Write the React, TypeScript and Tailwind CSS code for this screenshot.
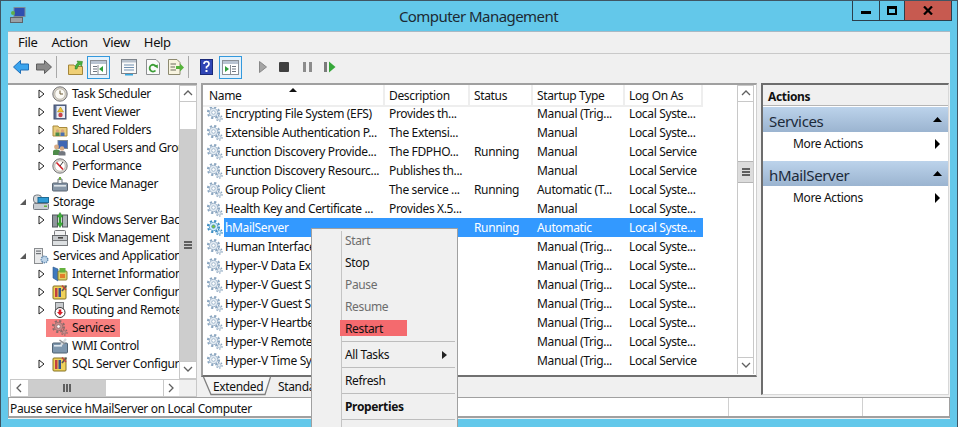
import React from 'react';

const FONT = "font-['Noto_Sans',sans-serif]";

// Small service gear used in the list and tree
function Gear({ active = false, muted = false }: { active?: boolean; muted?: boolean }) {
  const main = muted ? '#8a6a6a' : active ? '#3f8fc4' : '#8ba6c0';
  const fill = muted ? '#c98a8a' : active ? '#d7eefc' : '#e3ebf2';
  const hub = active ? '#7fc23f' : '#ffffff';
  return (
    <svg width="16" height="16" viewBox="0 0 16 16" className="shrink-0">
      <circle cx="6.5" cy="6.5" r="5.6" fill="none" stroke={main} strokeWidth="2" strokeDasharray="2.2 2.2" />
      <circle cx="6.5" cy="6.5" r="4.2" fill={fill} stroke={main} strokeWidth="0.8" />
      <circle cx="6.5" cy="6.5" r="1.8" fill={hub} stroke={main} strokeWidth="0.7" />
      <circle cx="12.2" cy="12.2" r="2.9" fill="none" stroke={main} strokeWidth="1.4" strokeDasharray="1.5 1.5" />
      <circle cx="12.2" cy="12.2" r="1.8" fill={fill} stroke={main} strokeWidth="0.6" />
    </svg>
  );
}

function TreeIcon({ kind }: { kind: string }) {
  switch (kind) {
    case 'clock':
      return (
        <svg width="16" height="16" viewBox="0 0 16 16">
          <circle cx="8" cy="8" r="7.2" fill="#d9d4c8" stroke="#77777a" />
          <circle cx="8" cy="8" r="5.2" fill="#fbfaf5" stroke="#a7a39a" strokeWidth="0.6" />
          <path d="M8 4.5V8H11" fill="none" stroke="#6b5a35" strokeWidth="1" />
        </svg>
      );
    case 'log':
      return (
        <svg width="16" height="16" viewBox="0 0 16 16">
          <rect x="2" y="1" width="12" height="14" fill="#5d6f96" stroke="#44506e" />
          <rect x="4.5" y="2" width="8.5" height="12" fill="#e9edf5" />
          <path d="M8.5 3L11.5 8H5.5Z" fill="#f3c62f" stroke="#9c7a12" strokeWidth="0.5" />
          <circle cx="8.5" cy="11" r="2.2" fill="#c9434b" />
        </svg>
      );
    case 'share':
      return (
        <svg width="16" height="16" viewBox="0 0 16 16">
          <path d="M1 4H6L7 5.5H15V14H1Z" fill="#e9cd7c" stroke="#a98a3c" />
          <circle cx="5.5" cy="9" r="1.7" fill="#d8a47c" />
          <rect x="3.5" y="10.5" width="4" height="3.5" fill="#4f8c4a" />
          <circle cx="10.5" cy="9" r="1.7" fill="#d8a47c" />
          <rect x="8.5" y="10.5" width="4" height="3.5" fill="#4b6fb0" />
        </svg>
      );
    case 'users':
      return (
        <svg width="16" height="16" viewBox="0 0 16 16">
          <rect x="6" y="0.5" width="9.5" height="8" fill="#3f66b4" stroke="#7d8794" />
          <circle cx="4.5" cy="7" r="2.4" fill="#d9ab84" />
          <path d="M1 15V11.5Q1 9.5 4.5 9.5T8 11.5V15Z" fill="#4f8c4a" />
          <circle cx="10" cy="8.5" r="2.3" fill="#d9ab84" />
          <path d="M6.5 15.5V13Q6.5 11 10 11T13.5 13V15.5Z" fill="#72777f" />
        </svg>
      );
    case 'perf':
      return (
        <svg width="16" height="16" viewBox="0 0 16 16">
          <circle cx="8" cy="8" r="7.2" fill="#d9d6d0" stroke="#77777a" />
          <circle cx="8" cy="8" r="5.2" fill="#ffffff" stroke="#a7a39a" strokeWidth="0.6" />
          <path d="M4.5 4.5L11 11.5" stroke="#d2232a" strokeWidth="1.6" />
          <path d="M8 8L11 4" stroke="#3a3a3a" strokeWidth="1" />
        </svg>
      );
    case 'device':
      return (
        <svg width="16" height="16" viewBox="0 0 16 16">
          <rect x="0.5" y="7" width="15" height="8" rx="1" fill="#8797a8" stroke="#5a6572" />
          <rect x="2" y="9" width="12" height="1.6" fill="#dfe5ea" />
          <path d="M6 7V3H10V7" fill="#eef1f3" stroke="#6a7480" />
          <rect x="7" y="1" width="2" height="3" fill="#6faa3f" />
        </svg>
      );
    case 'storage':
      return (
        <svg width="16" height="16" viewBox="0 0 16 16">
          <rect x="0.5" y="9.5" width="15" height="6" rx="1" fill="#c7ccd1" stroke="#737980" />
          <rect x="0.5" y="1" width="8" height="8" rx="3" fill="#d5d8db" stroke="#737980" />
          <rect x="5" y="3.5" width="10.5" height="5" fill="#2f9bd5" stroke="#1d6a94" />
          <rect x="11" y="11.5" width="3" height="1.5" fill="#64b33f" />
        </svg>
      );
    case 'backup':
      return (
        <svg width="16" height="16" viewBox="0 0 16 16">
          <rect x="0.5" y="3" width="5" height="12" fill="#8f959c" stroke="#55595f" />
          <rect x="10.5" y="3" width="5" height="12" fill="#aeb3b9" stroke="#55595f" />
          <path d="M8 0.5L11 5H9V11L11 11L8 15.5L5 11H7V5H5Z" fill="#3fae3c" stroke="#1e7a1e" strokeWidth="0.5" />
        </svg>
      );
    case 'disk':
      return (
        <svg width="16" height="16" viewBox="0 0 16 16">
          <rect x="2.5" y="0.5" width="11" height="5" rx="1" fill="#f0f1f2" stroke="#77797c" />
          <rect x="0.5" y="5.5" width="15" height="5" fill="#c5c8cb" stroke="#66696c" />
          <rect x="0.5" y="10.5" width="15" height="5" fill="#dcdfe1" stroke="#77797c" />
          <rect x="6" y="7" width="5" height="1.6" fill="#444" />
        </svg>
      );
    case 'apps':
      return (
        <svg width="16" height="16" viewBox="0 0 16 16">
          <rect x="1.5" y="0.5" width="8" height="15" fill="#e8e9ea" stroke="#8a8d90" />
          <rect x="3" y="2.5" width="5" height="1.2" fill="#6f7377" />
          <rect x="3" y="5" width="5" height="1.2" fill="#6f7377" />
          <circle cx="11.5" cy="11.5" r="3.3" fill="#bcd3e8" stroke="#5f87ad" strokeWidth="1.4" strokeDasharray="1.4 0.9" />
        </svg>
      );
    case 'iis':
      return (
        <svg width="16" height="16" viewBox="0 0 16 16">
          <path d="M1 1L6 3V15L1 12Z" fill="#3f79bd" stroke="#2a5688" strokeWidth="0.6" />
          <rect x="6" y="5" width="9" height="9" rx="1" fill="#dfd266" stroke="#8a8030" />
          <rect x="7.5" y="2" width="6" height="4.5" fill="#66b23f" />
          <rect x="8" y="8" width="5" height="4" fill="#e27d2a" />
        </svg>
      );
    case 'sql':
      return (
        <svg width="16" height="16" viewBox="0 0 16 16">
          <rect x="1" y="2" width="13" height="13" rx="1" fill="#f0d25a" stroke="#857222" />
          <rect x="3" y="4" width="2.5" height="9" fill="#c33f3f" />
          <rect x="6.5" y="4" width="2.5" height="9" fill="#33558f" />
          <path d="M10 7L14.5 1.5" stroke="#555" strokeWidth="1.6" />
          <path d="M10 1.5L14 6" stroke="#c33f3f" strokeWidth="1.3" />
        </svg>
      );
    case 'routing':
      return (
        <svg width="16" height="16" viewBox="0 0 16 16">
          <rect x="3.5" y="0.5" width="8" height="10" fill="#c9cccf" stroke="#74777a" />
          <circle cx="8" cy="10.5" r="5" fill="#fff" stroke="#333" />
          <path d="M6.7 7.5H9.3V10H11L8 13.5L5 10H6.7Z" fill="#d8202a" />
        </svg>
      );
    case 'wmi':
      return (
        <svg width="16" height="16" viewBox="0 0 16 16">
          <rect x="0.5" y="5" width="15" height="10" rx="1" fill="#7e97ae" stroke="#4f6273" />
          <rect x="2" y="7" width="8" height="1.6" fill="#dfe8ef" />
          <path d="M9 7L14 1" stroke="#d5d8db" strokeWidth="2.2" />
          <path d="M7.5 2L13 6" stroke="#8b8f93" strokeWidth="1.4" />
        </svg>
      );
    default:
      return <Gear muted />;
  }
}

function Expander({ open = false }: { open?: boolean }) {
  return open ? (
    <svg width="8" height="8" viewBox="0 0 8 8"><path d="M7 1V7H1Z" fill="#595959" /></svg>
  ) : (
    <svg width="7" height="10" viewBox="0 0 7 10"><path d="M1 1L6 5L1 9Z" fill="#fff" stroke="#222" /></svg>
  );
}

const treeRows = [
  { label: 'Task Scheduler', icon: 'clock', level: 1, exp: true },
  { label: 'Event Viewer', icon: 'log', level: 1, exp: true },
  { label: 'Shared Folders', icon: 'share', level: 1, exp: true },
  { label: 'Local Users and Groups', icon: 'users', level: 1, exp: true },
  { label: 'Performance', icon: 'perf', level: 1, exp: true },
  { label: 'Device Manager', icon: 'device', level: 1 },
  { label: 'Storage', icon: 'storage', level: 0, open: true },
  { label: 'Windows Server Backup', icon: 'backup', level: 1, exp: true },
  { label: 'Disk Management', icon: 'disk', level: 1 },
  { label: 'Services and Applications', icon: 'apps', level: 0, open: true },
  { label: 'Internet Information Services', icon: 'iis', level: 1, exp: true },
  { label: 'SQL Server Configuration', icon: 'sql', level: 1, exp: true },
  { label: 'Routing and Remote Access', icon: 'routing', level: 1, exp: true },
  { label: 'Services', icon: 'services', level: 1, marked: true },
  { label: 'WMI Control', icon: 'wmi', level: 1 },
  { label: 'SQL Server Configuration', icon: 'sql', level: 1, exp: true },
];

const services = [
  ['Encrypting File System (EFS)', 'Provides th...', '', 'Manual (Trig...', 'Local Syste...'],
  ['Extensible Authentication P...', 'The Extensi...', '', 'Manual', 'Local Syste...'],
  ['Function Discovery Provide...', 'The FDPHO...', 'Running', 'Manual', 'Local Service'],
  ['Function Discovery Resourc...', 'Publishes th...', '', 'Manual', 'Local Service'],
  ['Group Policy Client', 'The service ...', 'Running', 'Automatic (T...', 'Local Syste...'],
  ['Health Key and Certificate ...', 'Provides X.5...', '', 'Manual', 'Local Syste...'],
  ['hMailServer', '', 'Running', 'Automatic', 'Local Syste...'],
  ['Human Interface', '', '', 'Manual (Trig...', 'Local Syste...'],
  ['Hyper-V Data Ex', '', '', 'Manual (Trig...', 'Local Syste...'],
  ['Hyper-V Guest S', '', '', 'Manual (Trig...', 'Local Syste...'],
  ['Hyper-V Guest S', '', '', 'Manual (Trig...', 'Local Syste...'],
  ['Hyper-V Heartbe', '', '', 'Manual (Trig...', 'Local Syste...'],
  ['Hyper-V Remote', '', '', 'Manual (Trig...', 'Local Syste...'],
  ['Hyper-V Time Sy', '', '', 'Manual (Trig...', 'Local Service'],
];

function ScrollArrow({ dir }: { dir: 'up' | 'down' | 'left' | 'right' }) {
  const d = { up: 'M1 6L5 2L9 6', down: 'M1 2L5 6L9 2', left: 'M6 1L2 5L6 9', right: 'M2 1L6 5L2 9' }[dir];
  return (
    <svg width="10" height="10" viewBox="0 0 10 10" className="shrink-0">
      <path d={d} fill="none" stroke="#606060" strokeWidth="1.3" />
    </svg>
  );
}

function Grip({ vertical = false }: { vertical?: boolean }) {
  return vertical ? (
    <div className="flex gap-[1px]">
      <div className="w-[2px] h-[8px] bg-[#606060]" />
      <div className="w-[2px] h-[8px] bg-[#606060]" />
      <div className="w-[2px] h-[8px] bg-[#606060]" />
    </div>
  ) : (
    <div className="flex flex-col gap-[1px]">
      <div className="w-[8px] h-[2px] bg-[#606060]" />
      <div className="w-[8px] h-[2px] bg-[#606060]" />
      <div className="w-[8px] h-[2px] bg-[#606060]" />
    </div>
  );
}

function PaneIcon({ right = false }: { right?: boolean }) {
  return (
    <svg width="17" height="17" viewBox="0 0 17 17">
      <rect x="0.5" y="1.5" width="16" height="14" fill="#fff" stroke="#8a8f96" />
      <rect x="1" y="2" width="15" height="3" fill="#b9c4d2" />
      {right ? (
        <>
          <path d="M3 7V13L7 10Z" fill="#2f9e3a" />
          <path d="M10 7.5H14M10 10H14M10 12.5H14" stroke="#6d7580" />
        </>
      ) : (
        <>
          <path d="M3 7.5H7M3 10H7M3 12.5H7" stroke="#6d7580" />
          <path d="M13 7V13L9 10Z" fill="#2f9e3a" />
        </>
      )}
      <path d={right ? 'M8.5 6V15' : 'M8 6V15'} stroke="#8a8f96" />
    </svg>
  );
}

function Toolbar() {
  return (
    <div className="h-[30px] flex items-center border-t border-[#c9c9c9] pl-[5px] pb-[3px]">
      <svg width="16" height="14" viewBox="0 0 16 14">
        <path d="M7.5 0.5L0.5 7L7.5 13.5V10H15.5V4H7.5Z" fill="#3aa4ee" stroke="#1f6fb8" />
      </svg>
      <svg width="16" height="14" viewBox="0 0 16 14" className="ml-[7px]">
        <path d="M8.5 0.5L15.5 7L8.5 13.5V10H0.5V4H8.5Z" fill="#8a8a8a" stroke="#5e5e5e" />
      </svg>
      <div className="w-px h-[22px] bg-[#a9a9a9] ml-[4px]" />
      <svg width="16" height="15" viewBox="0 0 16 15" className="ml-[11px]">
        <path d="M0.5 5H6L7 6.5H14.5V14.5H0.5Z" fill="#efcf75" stroke="#a4863a" />
        <path d="M7 9Q7 4 10 3L9 1L14.5 1.5L13.5 6.5L12 4.5Q9.5 5.5 9 9Z" fill="#49b13c" stroke="#2b7d26" strokeWidth="0.5" />
      </svg>
      <div className="w-[23px] h-[23px] ml-[3px] border border-[#3399dd] bg-[#e4f1fb] flex items-center justify-center">
        <PaneIcon />
      </div>
      <svg width="16" height="17" viewBox="0 0 16 17" className="ml-[11px]">
        <rect x="0.5" y="0.5" width="15" height="14" fill="#fafafa" stroke="#7d838a" />
        <rect x="1" y="1" width="14" height="2.5" fill="#b8c2cd" />
        <path d="M3 6H13M3 8.5H13M3 11H13" stroke="#6e8fb0" />
        <rect x="4" y="15" width="8" height="1.5" fill="#35a7e0" />
      </svg>
      <svg width="14" height="16" viewBox="0 0 14 16" className="ml-[9px]">
        <path d="M0.5 0.5H10L13.5 4V15.5H0.5Z" fill="#fafafa" stroke="#8d8f91" />
        <path d="M10 7.5A3.4 3.4 0 1 0 9.5 11.5" fill="none" stroke="#3b9d35" strokeWidth="1.8" />
        <path d="M8 7L11.8 5.5V9.5Z" fill="#3b9d35" />
      </svg>
      <svg width="16" height="16" viewBox="0 0 16 16" className="ml-[8px]">
        <path d="M0.5 0.5H9L12 3.5V15.5H0.5Z" fill="#f8f4e0" stroke="#8d8a70" />
        <path d="M2.5 5H8M2.5 8H7M2.5 11H8" stroke="#6a6a5a" />
        <path d="M8 7H12V4.5L16 8.5L12 12.5V10H8Z" fill="#56b33c" />
      </svg>
      <div className="w-px h-[22px] bg-[#a9a9a9] ml-[4px]" />
      <svg width="13" height="16" viewBox="0 0 13 16" className="ml-[11px]">
        <rect x="0.5" y="0.5" width="12" height="15" fill="#2f45b5" stroke="#1b2a78" />
        <path d="M4 5Q4 2.5 6.5 2.5T9 5Q9 6.5 6.5 8V9.5" fill="none" stroke="#fff" strokeWidth="1.7" />
        <rect x="5.5" y="11" width="2" height="2" fill="#fff" />
      </svg>
      <div className="w-[23px] h-[23px] ml-[6px] border border-[#3399dd] bg-[#e4f1fb] flex items-center justify-center">
        <PaneIcon right />
      </div>
      <svg width="8" height="12" viewBox="0 0 8 12" className="ml-[17px]">
        <path d="M0.5 0.5L7.5 6L0.5 11.5Z" fill="#a5a5a5" stroke="#888" />
      </svg>
      <div className="w-[10px] h-[10px] ml-[12px] bg-[#404040] rounded-[1px]" />
      <div className="ml-[14px] flex gap-[3px]">
        <div className="w-[3px] h-[10px] bg-[#8c8c8c]" />
        <div className="w-[3px] h-[10px] bg-[#8c8c8c]" />
      </div>
      <svg width="12" height="12" viewBox="0 0 12 12" className="ml-[12px]">
        <rect x="0" y="1" width="3" height="10" fill="#7b7b7b" />
        <path d="M5 0.5L11.5 6L5 11.5Z" fill="#36a83a" />
      </svg>
    </div>
  );
}

function TreePane() {
  return (
    <div className="w-[189px] flex flex-col bg-white border-t-2 border-[#a0a0a0]">
      <div className="flex-1 flex min-h-0">
        <div className="flex-1 min-w-0 overflow-hidden">
          {treeRows.map((r, i) => (
            <div
              key={i}
              className={`h-[18px] flex items-center whitespace-nowrap ${r.level === 1 ? 'pl-[30px]' : 'pl-[11px]'}`}
            >
              <div className="w-[14px] flex justify-start shrink-0">
                {r.exp && <Expander />}
                {r.open && <Expander open />}
              </div>
              <div className={`h-[18px] flex items-center shrink-0 gap-[4px] ${r.marked ? 'bg-[#f88080] -ml-[6px] pl-[6px] pr-[5px]' : ''}`}>
                <div className="w-[16px] h-[16px] shrink-0"><TreeIcon kind={r.icon} /></div>
                <span>{r.label}</span>
              </div>
            </div>
          ))}
        </div>
        <div className="w-[18px] flex flex-col border border-[#c8c8c8] bg-white shrink-0">
          <div className="h-[16px] flex items-center justify-center border-b border-[#c8c8c8]"><ScrollArrow dir="up" /></div>
          <div className="h-[27px]" />
          <div className="flex-1 bg-[#cdcdcd] flex items-center justify-center"><Grip /></div>
          <div className="h-[17px] flex items-center justify-center border-t border-[#c8c8c8]"><ScrollArrow dir="down" /></div>
        </div>
      </div>
      <div className="h-[18px] flex border border-[#c8c8c8] ml-[2px]">
        <div className="w-[17px] flex items-center justify-center"><ScrollArrow dir="left" /></div>
        <div className="w-[78px] bg-[#cdcdcd] flex items-center justify-center"><Grip vertical /></div>
        <div className="flex-1" />
        <div className="w-[16px] flex items-center justify-center border-l border-[#c8c8c8]"><ScrollArrow dir="right" /></div>
        <div className="w-[17px] bg-[#f0f0f0]" />
      </div>
    </div>
  );
}

function ListPane() {
  const cols = 'grid grid-cols-[182px_85px_63px_92px_78px]';
  return (
    <div className="w-[556px] ml-[4px] flex flex-col">
      <div className="h-[294px] flex bg-white border-t-2 border-l-2 border-r border-b-2 border-[#a0a0a0] border-r-[#d0d0d0] border-b-[#707070]">
        <div className="flex-1 min-w-0 overflow-hidden">
          <div className={`${cols} h-[19px] relative`}>
            {['Name', 'Description', 'Status', 'Startup Type', 'Log On As'].map((h, i) => (
              <div key={h} className={`border-r-2 border-b-2 border-[#eeeeee] flex items-center pt-[2px] ${i === 0 ? 'pl-[6px]' : 'pl-[4px]'}`}>
                {h}
              </div>
            ))}
            <svg width="8" height="4" viewBox="0 0 8 4" className="absolute left-[86px] top-[3px]">
              <path d="M0 4L4 0L8 4Z" fill="#111" />
            </svg>
          </div>
          {services.map((s, i) => {
            const active = s[0] === 'hMailServer';
            return (
              <div key={i} className={`${cols} h-[19px] whitespace-nowrap`}>
                <div className="flex items-center pl-[4px] gap-[1px] min-w-0 overflow-hidden">
                  <Gear active={active} />
                  <span className={`flex-1 h-full flex items-center pl-[1px] ${active ? 'bg-[#3399ff] text-white' : ''}`}>{s[0]}</span>
                </div>
                {s.slice(1).map((c, j) => (
                  <div key={j} className={`flex items-center pl-[4px] ${active ? 'bg-[#3399ff] text-white' : ''}`}>{c}</div>
                ))}
              </div>
            );
          })}
        </div>
        <div className="w-[17px] shrink-0 flex flex-col border-x border-t border-[#c8c8c8] mb-[1px] mr-[2px]">
          <div className="h-[16px] flex items-center justify-center border-b border-[#c8c8c8]"><ScrollArrow dir="up" /></div>
          <div className="h-[59px]" />
          <div className="h-[22px] bg-[#dcdcdc] border-y border-[#b5b5b5] flex items-center justify-center"><Grip /></div>
          <div className="flex-1" />
          <div className="h-[17px] flex items-center justify-center border-t border-[#c8c8c8]"><ScrollArrow dir="down" /></div>
        </div>
      </div>
      <div className="h-[20px] flex items-start pl-[2px]">
        <div className="relative w-[66px] h-[18px] flex items-center pl-[10px] pt-[1px]">
          <svg width="68" height="19" viewBox="0 0 68 19" className="absolute left-0 top-0">
            <path d="M0.5 0L8 17.5H62L67.5 0" fill="#f6f6f6" stroke="#808080" strokeWidth="1.3" />
          </svg>
          <span className="relative">Extended</span>
        </div>
        <div className="h-[18px] pl-[9px] pt-[1px] flex items-center">Standard</div>
      </div>
    </div>
  );
}

function ActionBand({ title }: { title: string }) {
  return (
    <>
      <div className="h-[25px] bg-gradient-to-b from-[#bcd3eb] to-[#9bb4d0] flex items-center justify-between pl-[6px] pr-[6px] pt-[3px]">
        <span className="text-[15px] text-[#1c2a3a]">{title}</span>
        <svg width="9" height="5" viewBox="0 0 9 5" className="-mt-[3px]"><path d="M0 5L4.5 0L9 5Z" fill="#000" /></svg>
      </div>
      <div className="h-[29px] flex items-center justify-between pl-[30px] pr-[8px] pb-[6px] bg-white">
        <span>More Actions</span>
        <svg width="5" height="10" viewBox="0 0 5 10"><path d="M0 0L5 5L0 10Z" fill="#000" /></svg>
      </div>
    </>
  );
}

function ActionsPane() {
  return (
    <div className="w-[188px] ml-[4px] h-[312px] flex flex-col bg-white border-t-2 border-l-2 border-[#6d6d6d] border-r border-r-[#d8d8d8] border-b border-b-[#d8d8d8]">
      <div className="h-[21px] bg-[#f0f0f0] border-b border-[#b5b5b5] mb-[1px] flex items-center pl-[5px] pt-[3px] font-bold">Actions</div>
      <ActionBand title="Services" />
      <ActionBand title="hMailServer" />
    </div>
  );
}

function ContextMenu() {
  const Sep = () => <div className="h-px bg-[#bdbdbd] ml-[30px] mr-[2px]" />;
  const Item = ({ label, disabled, bold, mark, arrow }: { label: string; disabled?: boolean; bold?: boolean; mark?: boolean; arrow?: boolean }) => (
    <div className={`h-[22px] flex items-center pl-[33px] relative ${disabled ? 'text-[#6d6d6d]' : ''} ${bold ? 'font-bold' : ''}`}>
      {mark && <div className="absolute left-[28px] top-[2px] w-[67px] h-[16px] bg-[#f46a6e]" />}
      <span className="relative">{label}</span>
      {arrow && (
        <svg width="5" height="8" viewBox="0 0 5 8" className="absolute right-[10px] top-[7px]"><path d="M0 0L5 4L0 8Z" fill="#222" /></svg>
      )}
    </div>
  );
  return (
    <div className="absolute left-[310px] top-[227px] w-[147px] h-[210px] bg-[#f0f0f0] border border-[#a0a0a0] pt-[1px]">
      <div className="absolute left-[29px] top-[2px] bottom-0 w-px bg-[#c4c4c4]" />
      <Item label="Start" disabled />
      <Item label="Stop" />
      <Item label="Pause" disabled />
      <Item label="Resume" disabled />
      <Item label="Restart" mark />
      <div className="h-[1px]" />
      <Sep />
      <div className="h-[2px]" />
      <Item label="All Tasks" arrow />
      <div className="h-[1px]" />
      <Sep />
      <div className="h-[2px]" />
      <Item label="Refresh" />
      <div className="h-[1px]" />
      <Sep />
      <div className="h-[2px]" />
      <Item label="Properties" bold />
      <div className="h-[1px]" />
      <Sep />
    </div>
  );
}

export default function App() {
  return (
    <div className={`${FONT} relative w-[958px] h-[427px] overflow-hidden bg-[#63c8ea] border-t border-x border-[#3f5563] text-[12px] tracking-[-0.35px] text-[#111]`}>
      <div className="h-[30px] flex items-start relative">
        <svg width="16" height="16" viewBox="0 0 16 16" className="ml-[9px] mt-[6px]">
          <rect x="4" y="0.5" width="11" height="9" fill="#2f4fb0" stroke="#7d8a96" />
          <rect x="0.5" y="10.5" width="12" height="5" fill="#9aa0a6" stroke="#5e6369" />
          <circle cx="3" cy="6" r="2" fill="#5fae4a" />
        </svg>
        <div className="flex-1 text-center text-[15px] tracking-[-0.55px] pt-[4px] pl-[79px] text-[#1d2a33]">Computer Management</div>
        <div className="flex h-[21px] border-x border-b border-[#2c3e4b] mr-[5px] -mt-px">
          <div className="w-[27px] flex items-center justify-center border-r border-[#2c3e4b]">
            <div className="w-[10px] h-[3px] bg-black mt-[5px]" />
          </div>
          <div className="w-[25px] flex items-center justify-center border-r border-[#2c3e4b]">
            <div className="w-[10px] h-[9px] border-2 border-t-[3px] border-black" />
          </div>
          <div className="w-[46px] flex items-center justify-center bg-[#c75a50]">
            <svg width="10" height="9" viewBox="0 0 10 9"><path d="M1 0.5L9 8.5M9 0.5L1 8.5" stroke="#000" strokeWidth="2.2" /></svg>
          </div>
        </div>
      </div>
      <div className="mx-[7px] h-[388px] bg-[#f0f0f0] flex flex-col border-t border-[#a9b9c4]">
        <div className="h-[21px] flex items-center gap-[14px] pl-[10px] text-[13px]">
          <span>File</span>
          <span>Action</span>
          <span className="ml-[1px]">View</span>
          <span>Help</span>
        </div>
        <Toolbar />
        <div className="flex h-[314px]">
          <TreePane />
          <ListPane />
          <ActionsPane />
        </div>
        <div className="h-[21px] bg-white border border-[#a0a0a0] border-b-2 flex items-center">
          <div className="w-[720px] pl-[1px] pt-[3px] border-r border-[#d0d0d0] h-full flex items-center">Pause service hMailServer on Local Computer</div>
          <div className="w-[134px] border-r border-[#d0d0d0] h-full" />
        </div>
      </div>
      <ContextMenu />
    </div>
  );
}
